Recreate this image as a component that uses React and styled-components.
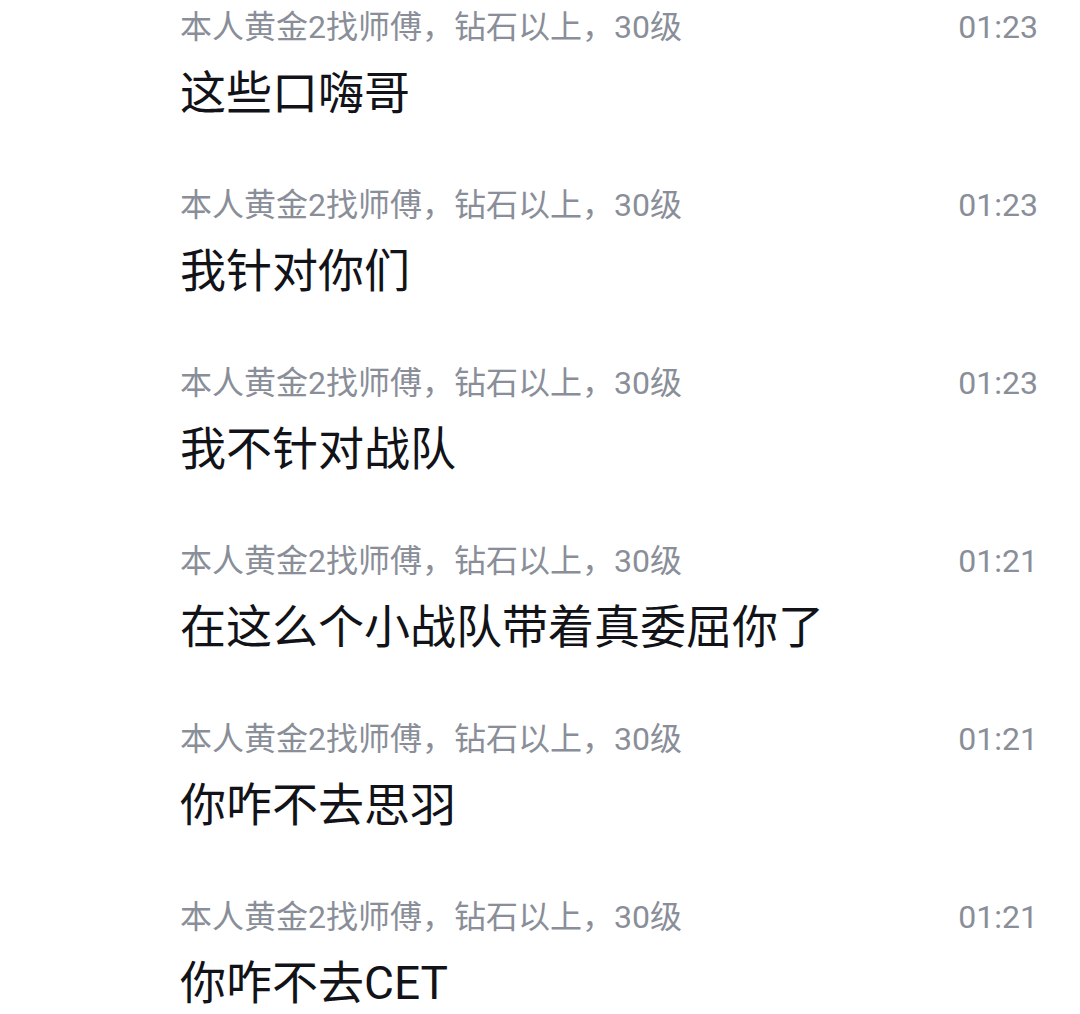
import React from "react";
import styled, { createGlobalStyle } from "styled-components";

const colors = {
  background: "#ffffff",
  meta: "#898e98",
  text: "#121318",
};

const fonts = {
  primary: "Roboto, 'Noto Sans CJK SC', 'Noto Sans', sans-serif",
};

const GlobalStyle = createGlobalStyle`
  html, body {
    margin: 0;
    padding: 0;
    background: ${colors.background};
  }
  body {
    font-family: ${fonts.primary};
  }
`;

const messages = [
  { name: "本人黄金2找师傅，钻石以上，30级", time: "01:23", text: "这些口嗨哥" },
  { name: "本人黄金2找师傅，钻石以上，30级", time: "01:23", text: "我针对你们" },
  { name: "本人黄金2找师傅，钻石以上，30级", time: "01:23", text: "我不针对战队" },
  { name: "本人黄金2找师傅，钻石以上，30级", time: "01:21", text: "在这么个小战队带着真委屈你了" },
  { name: "本人黄金2找师傅，钻石以上，30级", time: "01:21", text: "你咋不去思羽" },
  { name: "本人黄金2找师傅，钻石以上，30级", time: "01:21", text: "你咋不去CET" },
];

const Page = styled.div`
  width: 1080px;
  height: 1014px;
  overflow: hidden;
  background: ${colors.background};
`;

const List = styled.ul`
  list-style: none;
  margin: 0;
  padding: 0;
  display: flex;
  flex-direction: column;
  gap: 52px;
`;

const Item = styled.li`
  display: flex;
  flex-direction: column;
  gap: 6px;
  padding: 0 42px 0 180px;
`;

const Header = styled.div`
  display: flex;
  justify-content: space-between;
  align-items: center;
  height: 54px;
  color: ${colors.meta};
`;

const Name = styled.span`
  font-size: 32px;
  line-height: 54px;
`;

const Time = styled.span`
  font-size: 32px;
  line-height: 54px;
`;

const Body = styled.div`
  font-size: 46px;
  line-height: 66px;
  color: ${colors.text};
`;

const App = () => {
  return (
    <>
      <GlobalStyle />
      <Page>
        <List>
          {messages.map((m, i) => (
            <Item key={i}>
              <Header>
                <Name>{m.name}</Name>
                <Time>{m.time}</Time>
              </Header>
              <Body>{m.text}</Body>
            </Item>
          ))}
        </List>
      </Page>
    </>
  );
};

export default App;
